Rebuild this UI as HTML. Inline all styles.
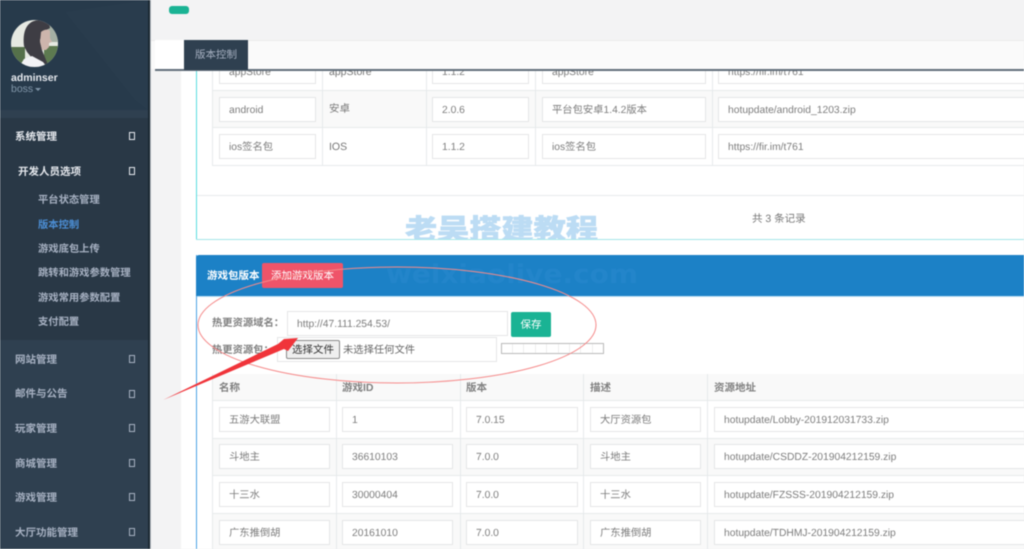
<!DOCTYPE html>
<html lang="zh"><head><meta charset="utf-8"><title>版本控制</title>
<style>
html,body{margin:0;padding:0;width:1024px;height:549px;overflow:hidden;background:#f3f3f4}
body{position:relative;font:10.5px/14px "Liberation Sans","Noto Sans CJK SC",sans-serif;color:#777;text-rendering:geometricPrecision;filter:blur(.45px)}
div,span{position:absolute;box-sizing:border-box;white-space:nowrap}
.m{left:15px;color:#a7b1c2;font-weight:bold;font-size:10.5px;line-height:14px}
.s{left:38px;color:#a7b1c2;font-weight:bold;font-size:10.3px;line-height:14px}
.x{left:129px;width:6px;height:8px;border:1px solid #a7b1c2}
.i{background:#fff;border:1px solid #e5e6e7;height:25px;line-height:25px;padding-left:9px;color:#7d7d7d;overflow:hidden;font-size:10.3px}
.l{background:#e7eaec}
.t{color:#777;line-height:14px}
</style></head><body>
<!-- sidebar -->
<div style="left:0;top:0;width:148px;height:549px;background:#2f4050"></div>
<div style="left:0;top:0;width:148px;height:110px;background:#273a4b"></div>
<svg style="position:absolute;left:0;top:0" width="148" height="110"><polygon points="65,12 148,0 148,110 135,100" fill="#293c4d"/></svg>
<div style="left:0;top:118px;width:148px;height:222px;background:#293846"></div>
<div style="left:148px;top:0;width:2px;height:549px;background:#1c2933"></div>
<div style="left:150px;top:0;width:1px;height:549px;background:#b9bec4"></div>
<svg style="position:absolute;left:11px;top:20px" width="47" height="47" viewBox="0 0 47 47">
<defs><clipPath id="c"><circle cx="23.5" cy="23.5" r="23.5"/></clipPath></defs>
<g clip-path="url(#c)"><rect width="47" height="47" fill="#e6e9e2"/>
<rect x="0" y="27" width="14" height="20" fill="#55704a"/>
<rect x="33" y="26" width="14" height="21" fill="#5d7a50"/>
<rect x="37" y="0" width="10" height="22" fill="#a5b0a4"/>
<path d="M13 26C11 8 18 0 29 0c5 0 10 3 10 8l-7 4-3 8 2 10 4 10 3 7H20l1-9-5-6z" fill="#3e3d44"/>
<path d="M30 12c3-3 8-3 9-1l0 7 2 4-3 1 0 4-3 3-4 0-2-8z" fill="#cdb5ac"/>
<path d="M8 47l5-8 8-3 11 6 4 5z" fill="#f2f2f5"/></g></svg>
<div style="left:11px;top:71px;color:#e6e9ee;font-weight:bold;font-size:10.5px">adminser</div>
<div style="left:11px;top:82px;color:#8095a8;font-size:10.5px">boss</div>
<div style="left:35px;top:88px;border:3px solid transparent;border-top-color:#8095a8"></div>
<div class="m" style="top:130px;color:#e6e9ee">系统管理</div><div class="x" style="top:132px;border-color:#e6e9ee"></div>
<div class="m" style="left:18px;top:165px;color:#e6e9ee">开发人员选项</div><div class="x" style="top:167px;border-color:#e6e9ee"></div>
<div class="s" style="top:194px">平台状态管理</div>
<div class="s" style="top:219px;color:#4c8fd6">版本控制</div>
<div class="s" style="top:243px">游戏底包上传</div>
<div class="s" style="top:267px">跳转和游戏参数管理</div>
<div class="s" style="top:292px">游戏常用参数配置</div>
<div class="s" style="top:316px">支付配置</div>
<div class="m" style="top:353px">网站管理</div><div class="x" style="top:355px"></div>
<div class="m" style="top:387px">邮件与公告</div><div class="x" style="top:390px"></div>
<div class="m" style="top:422px">玩家管理</div><div class="x" style="top:424px"></div>
<div class="m" style="top:457px">商城管理</div><div class="x" style="top:459px"></div>
<div class="m" style="top:491px">游戏管理</div><div class="x" style="top:493px"></div>
<div class="m" style="top:526px">大厅功能管理</div><div class="x" style="top:528px"></div>
<!-- content -->
<div style="left:169px;top:6px;width:20px;height:8px;background:#1ab394;border-radius:3px"></div>
<div style="left:181px;top:40px;width:843px;height:509px;background:#fff"></div>
<!-- panel 1 -->
<div style="left:196px;top:60px;width:1px;height:180px;background:#5bdde0"></div>
<div class="l" style="left:197px;top:195px;width:827px;height:1px"></div>
<div style="left:212px;top:90px;width:812px;height:38px;background:#f9f9f9"></div>
<div class="l" style="left:212px;top:60px;width:1px;height:106px"></div>
<div class="l" style="left:322px;top:60px;width:1px;height:106px"></div>
<div class="l" style="left:426px;top:60px;width:1px;height:106px"></div>
<div class="l" style="left:535px;top:60px;width:1px;height:106px"></div>
<div class="l" style="left:712px;top:60px;width:1px;height:106px"></div>
<div class="l" style="left:212px;top:90px;width:812px;height:1px"></div>
<div class="l" style="left:212px;top:127px;width:812px;height:1px"></div>
<div class="l" style="left:212px;top:165px;width:812px;height:1px"></div>
<div class="i" style="left:219px;top:59px;width:97px">appStore</div><div class="t" style="left:329px;top:65px">appStore</div><div class="i" style="left:432px;top:59px;width:97px">1.1.2</div><div class="i" style="left:542px;top:59px;width:164px">appStore</div><div class="i" style="left:718px;top:59px;width:320px">https://fir.im/t761</div>
<div class="i" style="left:219px;top:97px;width:97px">android</div><div class="t" style="left:329px;top:102px">安卓</div><div class="i" style="left:432px;top:97px;width:97px">2.0.6</div><div class="i" style="left:542px;top:97px;width:164px">平台包安卓1.4.2版本</div><div class="i" style="left:718px;top:97px;width:320px">hotupdate/android_1203.zip</div>
<div class="i" style="left:219px;top:134px;width:97px">ios签名包</div><div class="t" style="left:329px;top:140px">IOS</div><div class="i" style="left:432px;top:134px;width:97px">1.1.2</div><div class="i" style="left:542px;top:134px;width:164px">ios签名包</div><div class="i" style="left:718px;top:134px;width:320px">https://fir.im/t761</div>
<div class="t" style="left:752px;top:212px">共 3 条记录</div>
<!-- tab bar -->
<div style="left:151px;top:40px;width:873px;height:29px;background:#fafafa;border-top:1px solid #ececec"></div>
<div style="left:155px;top:40px;width:29px;height:29px;background:#fff"></div>
<div style="left:155px;top:69px;width:869px;height:2px;background:#626e7a"></div>
<div style="left:184px;top:40px;width:64px;height:30px;background:#2f4050;color:#a7b1c2;font-size:10.5px;line-height:31px;text-align:center">版本控制</div>
<!-- panel 2 -->
<div style="left:196px;top:255px;width:1px;height:294px;background:#4ba3e3"></div>
<div style="left:196px;top:255px;width:828px;height:41px;background:#1c81c6;border-radius:3px 0 0 0"></div>
<div style="left:197px;top:296px;width:827px;height:1px;background:#bfe0f3"></div>
<div style="left:207px;top:269px;color:#fff;font-weight:bold;font-size:10.5px">游戏包版本</div>
<div style="left:262px;top:263px;width:81px;height:25px;background:#ef5469;border-radius:2px;color:#fff;line-height:26px;text-align:center;font-size:10.5px">添加游戏版本</div>
<div style="left:212px;top:317px;font-weight:bold;color:#808080;font-size:10.3px">热更资源域名：</div>
<div class="i" style="left:287px;top:311px;width:221px">http://47.111.254.53/</div>
<div style="left:511px;top:312px;width:40px;height:25px;background:#1ab394;border-radius:2px;color:#fff;line-height:26px;text-align:center;font-size:10.5px">保存</div>
<div style="left:212px;top:344px;font-weight:bold;color:#808080;font-size:10.3px">热更资源包：</div>
<div style="left:277px;top:337px;width:220px;height:25px;background:#fff;border:1px solid #e5e6e7"></div>
<div style="left:286px;top:340px;width:54px;height:19px;background:#efefef;border:1px solid #8a8a8a;border-radius:2px;color:#333;line-height:18px;text-align:center;font-size:10.5px">选择文件</div>
<div style="left:343px;top:344px;color:#666;font-size:10.3px">未选择任何文件</div>
<svg style="position:absolute;left:501px;top:343px" width="103" height="11"><rect x=".5" y=".5" width="102" height="10" fill="#fff" stroke="#bbb"/><path d="M11.5 1v9M22.5 1v9M34.5 1v9M45.5 1v9M57.5 1v9M68.5 1v9M79.5 1v9M91.5 1v9" stroke="#eee"/></svg>
<!-- table 2 -->
<div style="left:212px;top:374px;width:812px;height:26px;background:#f9f9f9"></div>
<div style="left:212px;top:438px;width:812px;height:37px;background:#f9f9f9"></div>
<div style="left:212px;top:513px;width:812px;height:36px;background:#f9f9f9"></div>
<div class="l" style="left:212px;top:374px;width:1px;height:175px"></div>
<div class="l" style="left:336px;top:374px;width:1px;height:175px"></div>
<div class="l" style="left:460px;top:374px;width:1px;height:175px"></div>
<div class="l" style="left:583px;top:374px;width:1px;height:175px"></div>
<div class="l" style="left:707px;top:374px;width:1px;height:175px"></div>
<div class="l" style="left:212px;top:400px;width:812px;height:1px"></div>
<div class="l" style="left:212px;top:438px;width:812px;height:1px"></div>
<div class="l" style="left:212px;top:475px;width:812px;height:1px"></div>
<div class="l" style="left:212px;top:513px;width:812px;height:1px"></div>
<div class="t" style="left:219px;top:381px;font-weight:bold;color:#808080">名称</div>
<div class="t" style="left:342px;top:381px;font-weight:bold;color:#808080">游戏ID</div>
<div class="t" style="left:466px;top:381px;font-weight:bold;color:#808080">版本</div>
<div class="t" style="left:590px;top:381px;font-weight:bold;color:#808080">描述</div>
<div class="t" style="left:714px;top:381px;font-weight:bold;color:#808080">资源地址</div>
<div class="i" style="left:219px;top:407px;width:111px">五游大联盟</div><div class="i" style="left:342px;top:407px;width:111px">1</div><div class="i" style="left:466px;top:407px;width:112px">7.0.15</div><div class="i" style="left:590px;top:407px;width:111px">大厅资源包</div><div class="i" style="left:714px;top:407px;width:320px">hotupdate/Lobby-201912031733.zip</div>
<div class="i" style="left:219px;top:444px;width:111px">斗地主</div><div class="i" style="left:342px;top:444px;width:111px">36610103</div><div class="i" style="left:466px;top:444px;width:112px">7.0.0</div><div class="i" style="left:590px;top:444px;width:111px">斗地主</div><div class="i" style="left:714px;top:444px;width:320px">hotupdate/CSDDZ-201904212159.zip</div>
<div class="i" style="left:219px;top:482px;width:111px">十三水</div><div class="i" style="left:342px;top:482px;width:111px">30000404</div><div class="i" style="left:466px;top:482px;width:112px">7.0.0</div><div class="i" style="left:590px;top:482px;width:111px">十三水</div><div class="i" style="left:714px;top:482px;width:320px">hotupdate/FZSSS-201904212159.zip</div>
<div class="i" style="left:219px;top:520px;width:111px">广东推倒胡</div><div class="i" style="left:342px;top:520px;width:111px">20161010</div><div class="i" style="left:466px;top:520px;width:112px">7.0.0</div><div class="i" style="left:590px;top:520px;width:111px">广东推倒胡</div><div class="i" style="left:714px;top:520px;width:320px">hotupdate/TDHMJ-201904212159.zip</div>
<!-- watermark + annotations -->
<svg style="position:absolute;left:0;top:0" width="1024" height="549">
<defs><clipPath id="w"><rect x="380" y="205" width="240" height="35"/></clipPath></defs>
<g clip-path="url(#w)"><text x="405" y="239" font-family="Noto Sans CJK SC,sans-serif" font-weight="900" font-size="28" textLength="193" lengthAdjust="spacingAndGlyphs" fill="#bcdcf4" stroke="#bcdcf4" stroke-width=".5">老吴搭建教程</text></g>
<rect x="196" y="239" width="828" height="1" fill="#a5e6e8"/>
<text x="386" y="283" font-family="DejaVu Sans,sans-serif" font-weight="bold" font-size="26" textLength="252" lengthAdjust="spacingAndGlyphs" fill="#2385ca">weixiaolive.com</text>
<ellipse cx="397" cy="325" rx="199" ry="58" fill="none" stroke="#f58a8a" stroke-width="1"/>
<polygon points="163,400 278,344 284,339 298,338 288,351 284,349" fill="#f0343a"/>
</svg>
</body></html>
